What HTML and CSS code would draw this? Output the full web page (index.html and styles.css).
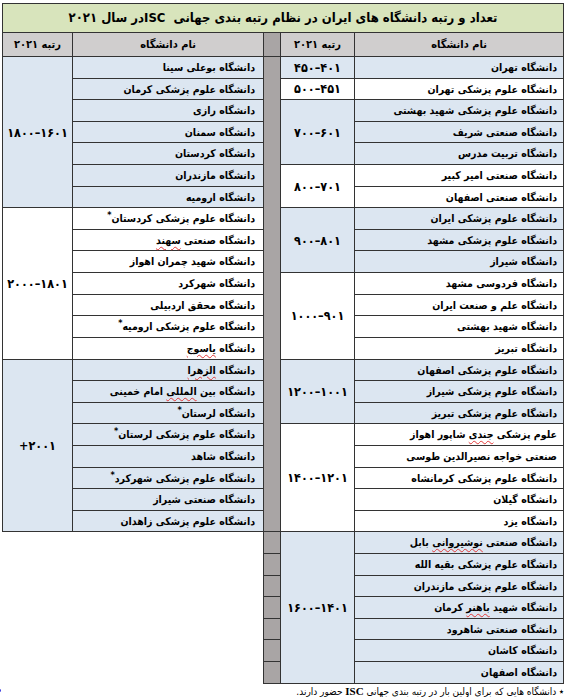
FILE: index.html
```html
<!DOCTYPE html>
<html lang="fa">
<head>
<meta charset="utf-8">
<link rel="stylesheet" href="styles.css">
</head>
<body>
<div class="sheet">
  <div class="title">تعداد و رتبه دانشگاه های ایران در نظام رتبه بندی جهانی&nbsp; ISCدر سال ۲۰۲۱</div>
  <div class="head">
    <div class="c-rn">نام دانشگاه</div>
    <div class="c-rr">رتبه ۲۰۲۱</div>
    <div class="c-sep"></div>
    <div class="c-ln">نام دانشگاه</div>
    <div class="c-lr">رتبه ۲۰۲۱</div>
  </div>
  <div class="body">
    <div class="tbl tbl-r">
      <div class="grp blue">
        <div class="names"><div class="n">دانشگاه تهران</div></div>
        <div class="rank"><span class="num">۴۵۰–۴۰۱</span></div>
      </div>
      <div class="grp">
        <div class="names"><div class="n">دانشگاه علوم پزشکی تهران</div></div>
        <div class="rank"><span class="num">۵۰۰–۴۵۱</span></div>
      </div>
      <div class="grp blue">
        <div class="names">
          <div class="n">دانشگاه علوم پزشکی شهید بهشتی</div>
          <div class="n">دانشگاه صنعتی شریف</div>
          <div class="n">دانشگاه تربیت مدرس</div>
        </div>
        <div class="rank"><span class="num">۷۰۰–۶۰۱</span></div>
      </div>
      <div class="grp">
        <div class="names">
          <div class="n">دانشگاه صنعتی امیر کبیر</div>
          <div class="n">دانشگاه صنعتی اصفهان</div>
        </div>
        <div class="rank"><span class="num">۸۰۰–۷۰۱</span></div>
      </div>
      <div class="grp blue">
        <div class="names">
          <div class="n">دانشگاه علوم پزشکی ایران</div>
          <div class="n">دانشگاه علوم پزشکی مشهد</div>
          <div class="n">دانشگاه شیراز</div>
        </div>
        <div class="rank"><span class="num">۹۰۰–۸۰۱</span></div>
      </div>
      <div class="grp">
        <div class="names">
          <div class="n">دانشگاه فردوسی مشهد</div>
          <div class="n">دانشگاه علم و صنعت ایران</div>
          <div class="n">دانشگاه شهید بهشتی</div>
          <div class="n">دانشگاه تبریز</div>
        </div>
        <div class="rank"><span class="num">۱۰۰۰–۹۰۱</span></div>
      </div>
      <div class="grp blue">
        <div class="names">
          <div class="n">دانشگاه علوم پزشکی اصفهان</div>
          <div class="n">دانشگاه علوم پزشکی شیراز</div>
          <div class="n">دانشگاه علوم پزشکی تبریز</div>
        </div>
        <div class="rank"><span class="num">۱۲۰۰–۱۰۰۱</span></div>
      </div>
      <div class="grp">
        <div class="names">
          <div class="n">علوم پزشکی <span class="sp">جندی</span> شاپور اهواز</div>
          <div class="n">صنعتی خواجه نصیرالدین طوسی</div>
          <div class="n">دانشگاه علوم پزشکی کرمانشاه</div>
          <div class="n">دانشگاه گیلان</div>
          <div class="n">دانشگاه یزد</div>
        </div>
        <div class="rank"><span class="num">۱۴۰۰–۱۲۰۱</span></div>
      </div>
      <div class="grp blue">
        <div class="names">
          <div class="n">دانشگاه صنعتی <span class="sp">نوشیروانی</span> بابل</div>
          <div class="n">دانشگاه علوم پزشکی بقیه الله</div>
          <div class="n">دانشگاه علوم پزشکی مازندران</div>
          <div class="n">دانشگاه شهید <span class="sp">باهنر</span> کرمان</div>
          <div class="n">دانشگاه صنعتی شاهرود</div>
          <div class="n">دانشگاه کاشان</div>
          <div class="n">دانشگاه اصفهان</div>
        </div>
        <div class="rank"><span class="num">۱۶۰۰–۱۴۰۱</span></div>
      </div>
    </div>

    <div class="sep">
      <div class="sep-fill"></div>
      <div class="sc"></div>
      <div class="sc"></div>
      <div class="sc"></div>
      <div class="sc"></div>
      <div class="sc"></div>
      <div class="sc"></div>
      <div class="sc"></div>
    </div>

    <div class="tbl tbl-l">
      <div class="grp blue">
        <div class="names">
          <div class="n">دانشگاه بوعلی سینا</div>
          <div class="n">دانشگاه علوم پزشکی کرمان</div>
          <div class="n">دانشگاه رازی</div>
          <div class="n">دانشگاه سمنان</div>
          <div class="n">دانشگاه کردستان</div>
          <div class="n">دانشگاه مازندران</div>
          <div class="n">دانشگاه ارومیه</div>
        </div>
        <div class="rank"><span class="num">۱۸۰۰–۱۶۰۱</span></div>
      </div>
      <div class="grp">
        <div class="names">
          <div class="n">دانشگاه علوم پزشکی کردستان<sup class="st">*</sup></div>
          <div class="n">دانشگاه صنعتی <span class="sp">سهند</span></div>
          <div class="n">دانشگاه شهید چمران اهواز</div>
          <div class="n">دانشگاه شهرکرد</div>
          <div class="n">دانشگاه محقق اردبیلی</div>
          <div class="n">دانشگاه علوم پزشکی ارومیه<sup class="st">*</sup></div>
          <div class="n">دانشگاه <span class="sp">یاسوج</span></div>
        </div>
        <div class="rank"><span class="num">۲۰۰۰–۱۸۰۱</span></div>
      </div>
      <div class="grp blue">
        <div class="names">
          <div class="n">دانشگاه <span class="sp">الزهرا</span></div>
          <div class="n">دانشگاه بین <span class="sp">المللی</span> امام خمینی</div>
          <div class="n">دانشگاه لرستان<sup class="st">*</sup></div>
          <div class="n">دانشگاه علوم پزشکی لرستان<sup class="st">*</sup></div>
          <div class="n">دانشگاه شاهد</div>
          <div class="n">دانشگاه علوم پزشکی شهرکرد<sup class="st">*</sup></div>
          <div class="n">دانشگاه صنعتی شیراز</div>
          <div class="n">دانشگاه علوم پزشکی زاهدان</div>
        </div>
        <div class="rank"><span class="num">+۲۰۰۱</span></div>
      </div>
    </div>
  </div>
  <div class="foot">
    <span class="note">٭ دانشگاه هایی که برای اولین بار در رتبه بندی جهانی <b class="isc">ISC</b> حضور دارند.</span>
    <span class="dot"></span>
  </div>
</div>
</body>
</html>
```
FILE: styles.css
```css
* { box-sizing: border-box; }

:root {
  --line: #333;
  --rh: 21.62px;
}

body {
  margin: 0;
  background: #fff;
  font-family: "DejaVu Sans Condensed", "DejaVu Sans", sans-serif;
  color: #000;
}

.sheet {
  width: 562px;
  margin: 3px 0 0 2px;
  direction: rtl;
}

.title {
  height: 30px;
  border: 1px solid var(--line);
  background: #d8e4bc;
  font-weight: bold;
  font-size: 13px;
  line-height: 27px;
  text-align: center;
  white-space: nowrap;
}

.head {
  display: flex;
  height: 24px;
  border-bottom: 1px solid var(--line);
  background: #d0cece;
}

.head > div {
  border-left: 1px solid var(--line);
  display: flex;
  align-items: center;
  justify-content: center;
  font-weight: bold;
  font-size: 11px;
}

.head .c-rn { width: 210px; border-right: 1px solid var(--line); }
.head .c-rr { width: 74px; }
.head .c-sep { width: 17px; background: #a9a5a5; }
.head .c-ln { width: 191px; }
.head .c-lr { width: 70px; }

.body {
  display: flex;
  align-items: flex-start;
}

.tbl {
  display: flex;
  flex-direction: column;
}

.tbl-r { width: 284px; }
.tbl-l { width: 261px; }

.grp {
  display: flex;
  background: #fff;
}

.grp.blue { background: #dce6f1; }

.names {
  display: flex;
  flex-direction: column;
  border-left: 1px solid var(--line);
}

.tbl-r .names { width: 210px; border-right: 1px solid var(--line); }
.tbl-l .names { width: 191px; }

.n {
  height: var(--rh);
  border-bottom: 1px solid var(--line);
  padding-right: 6px;
  font-size: 10.5px;
  font-weight: bold;
  line-height: 21px;
  white-space: nowrap;
  text-align: right;
}

.tbl-l .n { padding-right: 8px; }

.rank {
  flex: none;
  border-left: 1px solid var(--line);
  border-bottom: 1px solid var(--line);
  display: flex;
  align-items: center;
  justify-content: center;
  font-weight: bold;
  font-size: 12.5px;
}

.tbl-r .rank { width: 74px; }
.tbl-l .rank { width: 70px; }

.num {
  direction: ltr;
  unicode-bidi: isolate;
}

.st {
  font-size: 9px;
  vertical-align: 4px;
  line-height: 0;
}

.sp {
  text-decoration: underline wavy #e23a3a;
  text-decoration-thickness: 1px;
  text-underline-offset: 2px;
}

.sep {
  width: 17px;
  align-self: stretch;
  display: flex;
  flex-direction: column;
  background: #a9a5a5;
  border-left: 1px solid var(--line);
}

.sep-fill {
  flex: 1;
  border-bottom: 1px solid var(--line);
}

.sc {
  height: var(--rh);
  border-bottom: 1px solid var(--line);
}

.foot {
  display: flex;
  justify-content: space-between;
  align-items: center;
  width: 566px;
  margin: 1px 0 0 -2px;
  font-size: 10px;
  white-space: nowrap;
}

.isc {
  font-family: "Liberation Serif", serif;
  font-size: 11px;
}

.dot {
  width: 3px;
  height: 3px;
  background: #3a3ae0;
  border-radius: 50%;
}
```
